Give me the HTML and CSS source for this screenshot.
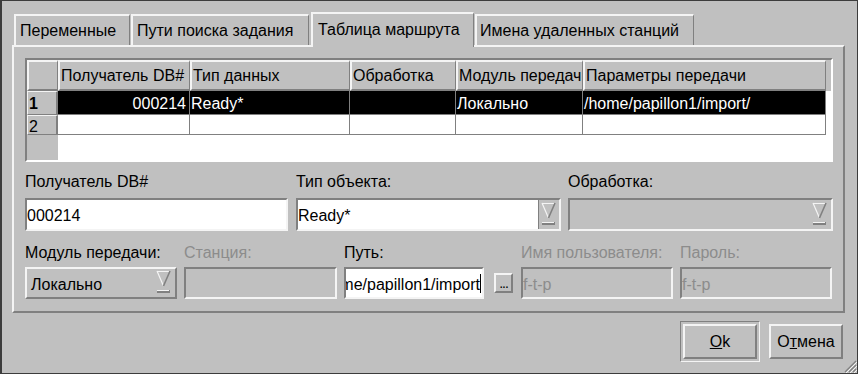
FILE: index.html
```html
<!DOCTYPE html>
<html lang="ru">
<head>
    <meta charset="UTF-8">
    <title>Таблица маршрута</title>
    <link rel="stylesheet" href="styles.css">
</head>
<body>
    <div class="window">
        <div class="tabs">
            <div class="tab tab-vars">Переменные</div>
            <div class="tab tab-paths">Пути поиска задания</div>
            <div class="tab tab-route active">Таблица маршрута</div>
            <div class="tab tab-hosts">Имена удаленных станций</div>
        </div>

        <div class="panel">
            <div class="grid">
                <div class="hcell"></div>
                <div class="hcell">Получатель DB#</div>
                <div class="hcell">Тип данных</div>
                <div class="hcell">Обработка</div>
                <div class="hcell">Модуль передачи</div>
                <div class="hcell">Параметры передачи</div>
                <div class="hfill"></div>

                <div class="rhead first">1</div>
                <div class="cell sel num">000214</div>
                <div class="cell sel">Ready*</div>
                <div class="cell sel"></div>
                <div class="cell sel">Локально</div>
                <div class="cell sel">/home/papillon1/import/</div>
                <div class="blank"></div>

                <div class="rhead second">2</div>
                <div class="cell"></div>
                <div class="cell"></div>
                <div class="cell"></div>
                <div class="cell"></div>
                <div class="cell"></div>
                <div class="blank"></div>

                <div class="gutter"></div>
                <div class="blank rest"></div>
            </div>

            <div class="form-row row-a">
                <div class="field w-db">
                    <div class="label">Получатель DB#</div>
                    <div class="entry">000214</div>
                </div>
                <div class="field w-type">
                    <div class="label">Тип объекта:</div>
                    <div class="entry combo">
                        <div class="combo-text">Ready*</div>
                        <div class="combo-arrow">
                            <svg width="15" height="24" viewBox="0 0 15 24"><polygon points="1,1 14,1 7.5,16" fill="#c0c0c0"/><path d="M1 1.5 H14 M1 1 L7.5 16" stroke="#f4f4f4" stroke-width="1.2" fill="none"/><path d="M14 1 L7.5 16" stroke="#808080" stroke-width="1.6" fill="none"/><rect x="1" y="20" width="13" height="3" fill="#808080"/><rect x="1" y="20" width="12" height="1" fill="#f4f4f4"/></svg>
                        </div>
                    </div>
                </div>
                <div class="field w-proc">
                    <div class="label">Обработка:</div>
                    <div class="entry combo off">
                        <div class="combo-text"></div>
                        <div class="combo-arrow">
                            <svg width="15" height="24" viewBox="0 0 15 24"><polygon points="1,1 14,1 7.5,16" fill="#c0c0c0"/><path d="M1 1.5 H14 M1 1 L7.5 16" stroke="#f4f4f4" stroke-width="1.2" fill="none"/><path d="M14 1 L7.5 16" stroke="#808080" stroke-width="1.6" fill="none"/><rect x="1" y="20" width="13" height="3" fill="#808080"/><rect x="1" y="20" width="12" height="1" fill="#f4f4f4"/></svg>
                        </div>
                    </div>
                </div>
            </div>

            <div class="form-row row-b">
                <div class="field w-small">
                    <div class="label">Модуль передачи:</div>
                    <div class="option">
                        <span>Локально</span>
                        <svg width="15" height="24" viewBox="0 0 15 24"><polygon points="1,1 14,1 7.5,16" fill="#c0c0c0"/><path d="M1 1.5 H14 M1 1 L7.5 16" stroke="#f4f4f4" stroke-width="1.2" fill="none"/><path d="M14 1 L7.5 16" stroke="#808080" stroke-width="1.6" fill="none"/><rect x="1" y="20" width="13" height="3" fill="#808080"/><rect x="1" y="20" width="12" height="1" fill="#f4f4f4"/></svg>
                    </div>
                </div>
                <div class="field w-station">
                    <div class="label dim">Станция:</div>
                    <div class="entry off"></div>
                </div>
                <div class="field w-path">
                    <div class="label">Путь:</div>
                    <div class="path-group">
                        <div class="entry path"><span>/home/papillon1/import</span><i class="cursor"></i></div>
                        <div class="browse">...</div>
                    </div>
                </div>
                <div class="field w-small">
                    <div class="label dim">Имя пользователя:</div>
                    <div class="entry off">f-t-p</div>
                </div>
                <div class="field w-small">
                    <div class="label dim">Пароль:</div>
                    <div class="entry off">f-t-p</div>
                </div>
            </div>
        </div>

        <div class="footer">
            <div class="default-ring">
                <div class="btn"><u>O</u>k</div>
            </div>
            <div class="btn">О<u>т</u>мена</div>
        </div>

        <svg class="grip" width="14" height="14" viewBox="0 0 14 14">
            <path d="M13 2 L2 13 M13 6 L6 13 M13 10 L10 13" stroke="#808080" stroke-width="1.2"/>
            <path d="M14 3 L3 14 M14 7 L7 14 M14 11 L11 14" stroke="#f4f4f4" stroke-width="1"/>
        </svg>
    </div>
</body>
</html>
```

FILE: styles.css
```css
:root {
    --face: #c0c0c0;
    --light: #f4f4f4;
    --shadow: #808080;
    --dim: #8c8c8c;
}

body {
    margin: 0;
    background: var(--face);
}

.window {
    position: relative;
    width: 858px;
    height: 374px;
    box-sizing: border-box;
    border: 1px solid #3c3c3c;
    border-left-width: 2px;
    padding: 11px 12px 0 10px;
    background: var(--face);
    font: 16px "Liberation Sans", Arial, sans-serif;
    color: #000;
}

/* tabs */
.tabs {
    display: flex;
    align-items: flex-end;
    height: 33px;
}

.tab {
    box-sizing: border-box;
    height: 31px;
    border: 2px solid var(--light);
    border-right: 1px solid var(--shadow);
    border-bottom: none;
    padding: 6px 0 0 4px;
    line-height: 18px;
    white-space: nowrap;
    margin-left: 1px;
}

.tab-vars { width: 116px; margin-left: 2px; }
.tab-paths { width: 178px; }
.tab-route { width: 163px; margin-left: 2px; }
.tab-hosts { width: 219px; padding-left: 3px; }

.tab.active {
    position: relative;
    z-index: 1;
    height: 35px;
    margin-bottom: -2px;
    padding-top: 7px;
    padding-left: 5px;
    background: var(--face);
}

.panel {
    box-sizing: border-box;
    height: 268px;
    border: 2px solid;
    border-color: var(--light) var(--shadow) var(--shadow) var(--light);
    padding: 11px 10px 0 11px;
}

/* table */
.grid {
    display: grid;
    grid-template-columns: 31px 132px 160px 106px 127px 243px 1fr;
    grid-template-rows: 31px 24px 20px 1fr;
    height: 104px;
    box-sizing: border-box;
    border: 2px solid;
    border-color: var(--shadow) #fff #fff var(--shadow);
    background: #fff;
}

.hcell {
    box-sizing: border-box;
    background: var(--face);
    border-top: 2px solid var(--light);
    border-left: 2px solid var(--light);
    border-right: 1px solid var(--shadow);
    border-bottom: 2px solid var(--shadow);
    padding: 5px 0 0 1px;
    line-height: 18px;
    white-space: nowrap;
    overflow: hidden;
}

.hfill {
    background: var(--face);
}

.cell {
    box-sizing: border-box;
    border-right: 1px solid var(--shadow);
    border-bottom: 1px solid var(--shadow);
    padding: 4px 0 0 1px;
    line-height: 18px;
    white-space: nowrap;
    overflow: hidden;
}

.cell.sel {
    background: #000;
    color: #fff;
}

.cell.num {
    text-align: right;
    padding-right: 3px;
}

.rhead {
    box-sizing: border-box;
    background: var(--face);
    border-top: 1px solid var(--light);
    border-left: 1px solid var(--light);
    border-right: 2px solid var(--shadow);
    border-bottom: 1px solid var(--shadow);
    padding-left: 1px;
    line-height: 18px;
    overflow: hidden;
}

.rhead.first {
    padding-top: 3px;
    font-weight: bold;
}

.rhead.second {
    padding-top: 2px;
}

.gutter {
    background: var(--face);
}

.blank.rest {
    grid-column: span 6;
}

/* form */
.form-row {
    display: flex;
}

.row-a {
    margin-top: 10px;
    gap: 8px;
}

.row-a .field + .field + .field {
    margin-left: -1px;
}

.row-b {
    margin-top: 12px;
    gap: 7px;
}

.label {
    height: 20px;
    line-height: 20px;
    white-space: nowrap;
}

.label.dim {
    color: var(--dim);
}

.row-a .label { margin-bottom: 6px; }
.row-b .label { margin-bottom: 4px; }

.w-db { width: 263px; }
.w-type { width: 265px; }
.w-proc { width: 265px; }
.w-small { width: 152px; }
.w-station { width: 153px; }
.w-path { width: 170px; }

.entry {
    box-sizing: border-box;
    height: 32px;
    border: 2px solid;
    border-color: var(--shadow) var(--light) var(--light) var(--shadow);
    background: #fff;
    padding: 7px 2px 0 0;
    line-height: 18px;
    white-space: nowrap;
    overflow: hidden;
}

.row-a .entry {
    height: 33px;
}

.entry.off {
    background: var(--face);
    color: var(--dim);
}

.combo {
    display: flex;
    padding: 0;
}

.combo-text {
    flex: 1;
    padding-top: 7px;
}

.combo-arrow {
    width: 21px;
    background: var(--face);
    border-left: 1px solid var(--shadow);
    padding: 2px 0 0 2px;
    box-sizing: border-box;
}

.combo.off .combo-arrow {
    border-left: none;
}

.option {
    box-sizing: border-box;
    height: 32px;
    display: flex;
    justify-content: space-between;
    border: 2px solid;
    border-color: var(--light) var(--shadow) var(--shadow) var(--light);
    padding: 0 4px 0 4px;
}

.option span {
    padding-top: 7px;
    line-height: 18px;
}

.option svg {
    margin-top: 1px;
}

.path-group {
    display: flex;
    align-items: center;
}

.entry.path {
    width: 140px;
    display: flex;
    justify-content: flex-end;
    padding-right: 0;
}

.cursor {
    flex: none;
    width: 1px;
    height: 19px;
    margin: -2px 1px 0 0;
    background: #000;
}

.browse {
    box-sizing: border-box;
    width: 19px;
    height: 20px;
    margin-left: 10px;
    border: 2px solid;
    border-color: var(--light) var(--shadow) var(--shadow) var(--light);
    padding-top: 1px;
    font-size: 14px;
    line-height: 14px;
    text-align: center;
    letter-spacing: -1px;
}

/* buttons */
.footer {
    display: flex;
    justify-content: flex-end;
    align-items: center;
    gap: 9px;
    margin-top: 8px;
    padding-right: 2px;
}

.default-ring {
    border: 1px solid;
    border-color: var(--shadow) var(--light) var(--light) var(--shadow);
    padding: 2px;
}

.btn {
    box-sizing: border-box;
    width: 74px;
    height: 35px;
    border: 2px solid;
    border-color: var(--light) var(--shadow) var(--shadow) var(--light);
    padding-top: 7px;
    line-height: 18px;
    text-align: center;
}

.grip {
    position: absolute;
    right: 0;
    bottom: 0;
}
```
